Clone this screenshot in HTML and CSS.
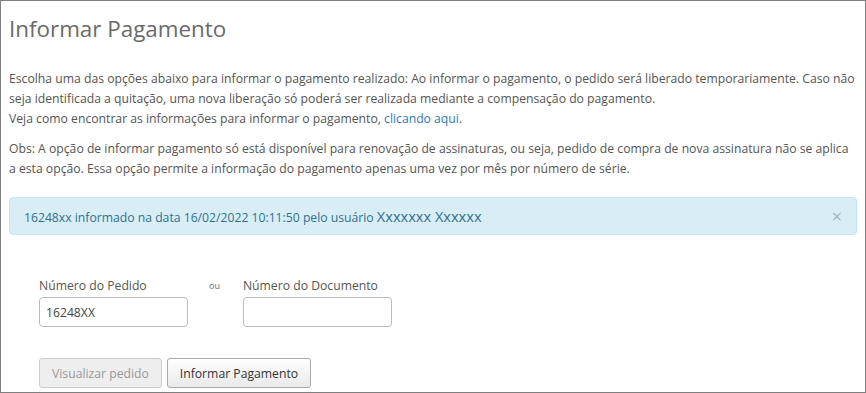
FILE: index.html
```html
<!DOCTYPE html>
<html lang="pt-BR">
<head>
<meta charset="utf-8">
<title>Informar Pagamento</title>
<link rel="stylesheet" href="styles.css">
</head>
<body>
<div class="frame">
  <h1 class="title">Informar Pagamento</h1>
  <p class="text">Escolha uma das opções abaixo para informar o pagamento realizado: Ao informar o pagamento, o pedido será liberado temporariamente. Caso não seja identificada a quitação, uma nova liberação só poderá ser realizada mediante a compensação do pagamento.<br>Veja como encontrar as informações para informar o pagamento, <a class="link" href="#">clicando aqui</a>.</p>
  <p class="text">Obs: A opção de informar pagamento só está disponível para renovação de assinaturas, ou seja, pedido de compra de nova assinatura não se aplica a esta opção. Essa opção permite a informação do pagamento apenas uma vez por mês por número de série.</p>
  <div class="alert">
    <span class="alert-text">16248xx informado na data 16/02/2022 10:11:50 pelo usuário <span class="user">Xxxxxxx Xxxxxx</span></span>
    <span class="close">×</span>
  </div>
  <div class="form">
    <div class="fields">
      <div class="field">
        <label class="label">Número do Pedido</label>
        <input class="input" type="text" value="16248XX">
      </div>
      <span class="ou">ou</span>
      <div class="field">
        <label class="label">Número do Documento</label>
        <input class="input" type="text" value="">
      </div>
    </div>
    <div class="buttons">
      <button class="btn btn-disabled" disabled>Visualizar pedido</button>
      <button class="btn">Informar Pagamento</button>
    </div>
  </div>
</div>
</body>
</html>
```
FILE: styles.css
```css
html, body {
  margin: 0;
  padding: 0;
  background: #fff;
}
body {
  font-family: "Open Sans", "Noto Sans", sans-serif;
  color: #555;
}
.frame {
  box-sizing: border-box;
  width: 866px;
  height: 393px;
  border: 1px solid #7f7f7f;
  padding: 0 8px;
  overflow: hidden;
}
.title {
  font-weight: 400;
  font-size: 22.4px;
  line-height: 28px;
  color: #6a6a6a;
  margin: 14px 0 26px;
}
.text {
  font-size: 12.2px;
  line-height: 20px;
  margin: 0 0 10px;
}
.link {
  color: #2a7bbf;
  text-decoration: none;
}
.alert {
  display: flex;
  align-items: center;
  justify-content: space-between;
  margin-top: 18px;
  height: 38px;
  box-sizing: border-box;
  background: #d9edf7;
  border: 1px solid #bce8f1;
  border-radius: 4px;
  padding: 0 14px;
  color: #31708f;
  font-size: 12.2px;
}
.user {
  font-size: 14.6px;
}
.close {
  color: #a8b4bb;
  font-size: 18px;
  line-height: 1;
}
.form {
  padding: 42px 0 0 30px;
}
.fields {
  display: flex;
  align-items: flex-start;
}
.field {
  display: flex;
  flex-direction: column;
  gap: 3px;
}
.label {
  font-size: 12.2px;
  line-height: 17px;
  color: #555;
}
.input {
  box-sizing: border-box;
  width: 149px;
  height: 30px;
  border: 1px solid #bbb;
  border-radius: 4px;
  padding: 0 6px;
  font-family: inherit;
  font-size: 12.2px;
  color: #444;
}
.ou {
  font-size: 9px;
  color: #666;
  margin: 2px 23px 0 21px;
}
.buttons {
  display: flex;
  gap: 5px;
  margin-top: 31px;
}
.btn {
  box-sizing: border-box;
  height: 30px;
  padding: 0 12px;
  border: 1px solid #aaa;
  border-radius: 3px;
  background: linear-gradient(#fff, #e9e9e9);
  font-family: inherit;
  font-size: 12.2px;
  color: #333;
}
.btn-disabled {
  color: #999;
  background: #eee;
  border-color: #ccc;
}
```
